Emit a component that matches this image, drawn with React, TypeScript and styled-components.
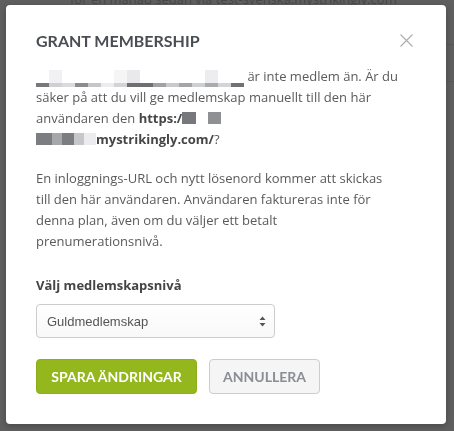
import React from 'react';
import styled, { createGlobalStyle } from 'styled-components';

const GlobalStyle = createGlobalStyle`
    html, body {
        margin: 0;
        padding: 0;
        background: #5f5f5f;
        overflow: hidden;
    }
    body {
        font-family: 'Open Sans', 'Liberation Sans', sans-serif;
    }
`;

const emailCells = [
    { top: '#ffffff', bottom: '#76787c' },
    { top: '#f1f1f3', bottom: '#cfd0d4' },
    { top: '#ffffff', bottom: '#d9dadd' },
    { top: '#ffffff', bottom: '#8a8c90' },
    { top: '#ffffff', bottom: '#c5c6ca' },
    { top: '#ffffff', bottom: '#ececee' },
    { top: '#f5f5f6', bottom: '#d2d3d6' },
    { top: '#e9e9ec', bottom: '#6d6f73' },
    { top: '#ffffff', bottom: '#6d6f73' },
    { top: '#ffffff', bottom: '#9fa1a5' },
    { top: '#ffffff', bottom: '#c8c9cd' },
    { top: '#ffffff', bottom: '#a3a5a9' },
    { top: '#ffffff', bottom: '#cdd0d3' },
    { top: '#ededf0', bottom: '#a9abaf' },
    { top: '#ffffff', bottom: '#d3d4d7' },
    { top: '#ffffff', bottom: '#6f7175' },
];

const hostCells = [
    { w: 14, c: '#76787c' },
    { w: 12, c: '#ffffff' },
    { w: 13, c: '#8e9094' },
];

const domainCells = [
    { w: 16, c: '#7b7d81' },
    { w: 10, c: '#a5a7ab' },
    { w: 12, c: '#7b7d81' },
    { w: 10, c: '#c5c7cb' },
    { w: 12, c: '#ececee' },
];

export default function App() {
    return (
        <>
            <GlobalStyle />
            <BackPage>
                <BackMeta>för en månad sedan via test-svenska.mystrikingly.com</BackMeta>
                <BackRow />
                <BackRow />
            </BackPage>
            <Modal>
                <ModalHeader>
                    <Title>GRANT MEMBERSHIP</Title>
                    <CloseButton aria-label="Stäng">
                        <svg width="13" height="13" viewBox="0 0 13 13">
                            <path
                                d="M0.5 0.5 L12.5 12.5 M12.5 0.5 L0.5 12.5"
                                stroke="#acacac"
                                strokeWidth="1.1"
                                fill="none"
                            />
                        </svg>
                    </CloseButton>
                </ModalHeader>
                <Paragraph>
                    <EmailMosaic>
                        {emailCells.map((cell, i) => (
                            <MosaicColumn key={i}>
                                <MosaicTop color={cell.top} />
                                <MosaicBottom color={cell.bottom} />
                            </MosaicColumn>
                        ))}
                    </EmailMosaic>{' '}
                    är inte medlem än. Är du
                    <br />
                    säker på att du vill ge medlemskap manuellt till den här
                    <br />
                    användaren den <Strong>https:/</Strong>
                    <BlockMosaic>
                        {hostCells.map((cell, i) => (
                            <MosaicBlock key={i} w={cell.w} color={cell.c} />
                        ))}
                    </BlockMosaic>
                    <br />
                    <BlockMosaic>
                        {domainCells.map((cell, i) => (
                            <MosaicBlock key={i} w={cell.w} color={cell.c} />
                        ))}
                    </BlockMosaic>
                    <Strong>mystrikingly.com/</Strong>?
                </Paragraph>
                <Paragraph>
                    En inloggnings-URL och nytt lösenord kommer att skickas
                    <br />
                    till den här användaren. Användaren faktureras inte för
                    <br />
                    denna plan, även om du väljer ett betalt
                    <br />
                    prenumerationsnivå.
                </Paragraph>
                <FieldLabel>Välj medlemskapsnivå</FieldLabel>
                <SelectBox>
                    <SelectValue>Guldmedlemskap</SelectValue>
                    <svg width="7" height="11" viewBox="0 0 7 11">
                        <path d="M3.5 0.5 L6.5 4 L0.5 4 Z" fill="#555" />
                        <path d="M0.5 7 L6.5 7 L3.5 10.5 Z" fill="#555" />
                    </svg>
                </SelectBox>
                <Actions>
                    <PrimaryButton>SPARA ÄNDRINGAR</PrimaryButton>
                    <SecondaryButton>ANNULLERA</SecondaryButton>
                </Actions>
            </Modal>
        </>
    );
}

const BackPage = styled.div`
    height: 431px;
    margin-top: -10px;
    padding-left: 70px;
`;

const BackMeta = styled.div`
    font-family: 'Open Sans', sans-serif;
    font-size: 13px;
    line-height: 18px;
    color: #484848;
    white-space: nowrap;
`;

const BackRow = styled.div`
    height: 26px;
    margin-top: 10px;
    border-bottom: 1px solid #575757;
`;

const Modal = styled.div`
    position: fixed;
    top: 5px;
    left: 6px;
    width: 440px;
    height: 419px;
    box-sizing: border-box;
    padding: 26px 30px 30px;
    background: #ffffff;
    border-radius: 4px;
    box-shadow: 0 2px 6px rgba(0, 0, 0, 0.25);
    display: flex;
    flex-direction: column;
`;

const ModalHeader = styled.div`
    display: flex;
    align-items: flex-start;
    justify-content: space-between;
    margin-bottom: 15px;
`;

const Title = styled.h2`
    margin: 0;
    font-family: Lato, 'Liberation Sans', sans-serif;
    font-weight: 700;
    font-size: 16px;
    line-height: 20px;
    color: #4a4d54;
`;

const CloseButton = styled.button`
    border: none;
    background: none;
    padding: 0;
    margin: 3px 3px 0 0;
    width: 13px;
    height: 13px;
    display: flex;
    cursor: pointer;
`;

const Paragraph = styled.p`
    margin: 0 0 18px;
    font-family: 'Open Sans', sans-serif;
    font-size: 13px;
    line-height: 21px;
    color: #5a5a5a;
    white-space: nowrap;
`;

const Strong = styled.strong`
    font-weight: 700;
    color: #464646;
`;

const EmailMosaic = styled.span`
    display: inline-flex;
    vertical-align: -2px;
`;

const MosaicColumn = styled.span`
    display: flex;
    flex-direction: column;
    width: 13px;
`;

const MosaicTop = styled.span<{ color: string }>`
    height: 13px;
    background: ${(p) => p.color};
`;

const MosaicBottom = styled.span<{ color: string }>`
    height: 4px;
    background: ${(p) => p.color};
`;

const BlockMosaic = styled.span`
    display: inline-flex;
    vertical-align: -1px;
`;

const MosaicBlock = styled.span<{ w: number; color: string }>`
    width: ${(p) => p.w}px;
    height: 12px;
    background: ${(p) => p.color};
`;

const FieldLabel = styled.label`
    display: block;
    margin-top: 5px;
    font-family: 'Open Sans', sans-serif;
    font-weight: 700;
    font-size: 13px;
    line-height: 21px;
    color: #444;
`;

const SelectBox = styled.div`
    margin-top: 8px;
    width: 239px;
    height: 35px;
    box-sizing: border-box;
    display: flex;
    align-items: center;
    justify-content: space-between;
    padding: 0 8px 0 10px;
    border: 1px solid #cccccc;
    border-radius: 4px;
    background: linear-gradient(#ffffff, #f8f8f8);
`;

const SelectValue = styled.span`
    font-family: 'Liberation Sans', Arial, sans-serif;
    font-size: 13px;
    color: #555;
`;

const Actions = styled.div`
    display: flex;
    gap: 12px;
    margin-top: 21px;
`;

const BaseButton = styled.button`
    height: 35px;
    box-sizing: border-box;
    border-radius: 4px;
    font-family: Lato, 'Liberation Sans', sans-serif;
    font-weight: 700;
    font-size: 14px;
    padding: 0;
    cursor: pointer;
`;

const PrimaryButton = styled(BaseButton)`
    width: 161px;
    border: 1px solid #8cae19;
    background: #93b71d;
    color: #ffffff;
`;

const SecondaryButton = styled(BaseButton)`
    width: 111px;
    border: 1px solid #cccccc;
    background: #f5f5f5;
    color: #8a8d93;
`;
